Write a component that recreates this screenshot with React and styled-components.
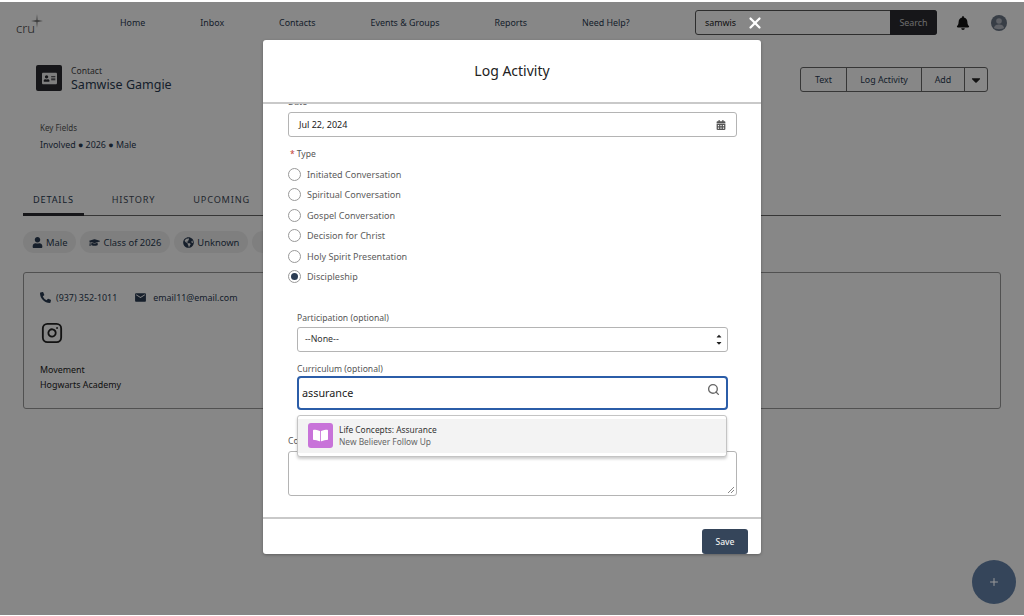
import React from 'react'
import styled, { createGlobalStyle } from 'styled-components'
import { Search as SearchIcon, Instagram, X, Plus } from 'lucide-react'
import { FaBell, FaCaretDown, FaCaretUp, FaPhoneAlt, FaGlobeAmericas, FaUser, FaBookOpen, FaAddressCard, FaGraduationCap, FaCalendarAlt } from 'react-icons/fa'
import { MdEmail } from 'react-icons/md'

const GlobalStyle = createGlobalStyle`
  html, body { margin: 0; padding: 0; height: 100%; background: #fff; overflow: hidden; }
  body { font-family: "Noto Sans", "Open Sans", sans-serif; color: #181818; }
  * { box-sizing: border-box; }
`

const Page = styled.div`
  width: 1024px;
  height: 616px;
  overflow: hidden;
  position: relative;
`

const Nav = styled.nav`
  height: 47px;
  padding: 10px 17px 0 16px;
  display: flex;
  align-items: flex-start;
`
const Logo = styled.div`
  width: 26px;
  height: 24px;
  margin-top: 3px;
  position: relative;
  font-size: 13px;
  line-height: 13px;
  padding-top: 9px;
  font-weight: 300;
  color: #444;
  svg { position: absolute; right: -1px; top: 1px; }
`
const NavLinks = styled.div`
  display: flex;
  gap: 55px;
  margin-left: 78px;
  flex: 1;
  padding-top: 6px;
`
const NavLink = styled.span`
  font-size: 8.9px;
  line-height: 13px;
  color: #2a3b52;
`
const SearchBox = styled.div`
  width: 242px;
  height: 25px;
  border: 1px solid #555;
  border-radius: 3px;
  display: flex;
  align-items: center;
  justify-content: space-between;
  padding-left: 9px;
  font-size: 8.9px;
  color: #222;
`
const SearchButton = styled.div`
  width: 47px;
  height: 25px;
  margin-right: -1px;
  background: #2b2b30;
  color: #ccc;
  display: flex;
  align-items: center;
  justify-content: center;
  border-radius: 0 3px 3px 0;
`
const NavIcons = styled.div`
  display: flex;
  align-items: center;
  gap: 21px;
  margin-left: 19px;
  height: 25px;
`

const RecordHeader = styled.header`
  display: flex;
  justify-content: space-between;
  padding: 18px 36px 0 36px;
  height: 70px;
`
const RecordTitle = styled.div`
  display: flex;
  gap: 9px;
`
const RecordIcon = styled.div`
  width: 26px;
  height: 26px;
  background: #2b2b30;
  border-radius: 2px;
  color: #eee;
  display: flex;
  align-items: center;
  justify-content: center;
`
const RecordType = styled.div`
  font-size: 8.6px;
  line-height: 12px;
  color: #444;
`
const RecordName = styled.div`
  font-size: 12.5px;
  line-height: 16px;
  color: #2a3b52;
`
const ButtonGroup = styled.div`
  display: flex;
  height: 25px;
  margin-top: 2px;
  border: 1px solid #666;
  border-radius: 3px;
`
const GroupButton = styled.div`
  width: ${p => p.$w}px;
  display: flex;
  align-items: center;
  justify-content: center;
  font-size: 8.9px;
  color: #2a3b52;
  & + & { border-left: 1px solid #666; }
`

const KeyFields = styled.section`
  padding: 5px 40px 0;
  height: 67px;
`
const FieldLabel = styled.div`
  font-size: 8px;
  line-height: 12px;
  color: #555;
`
const FieldValue = styled.div`
  font-size: 8.9px;
  line-height: 12px;
  margin-top: 5px;
  color: #2a3b52;
`

const Tabs = styled.div`
  margin: 0 23px;
  height: 32px;
  padding-left: 10px;
  display: flex;
  gap: 38px;
  border-bottom: 1px solid #666;
  position: relative;
`
const Tab = styled.div`
  font-size: 9.2px;
  letter-spacing: 0.8px;
  line-height: 13px;
  padding-top: 9px;
  color: ${p => p.$active ? '#2a3b52' : '#444c58'};
  position: relative;
  &::after {
    content: '';
    display: ${p => p.$active ? 'block' : 'none'};
    position: absolute;
    left: -10px;
    right: -10px;
    bottom: -1px;
    height: 3px;
    background: #2b2b30;
  }
`
const Pills = styled.div`
  display: flex;
  gap: 4px;
  margin: 15px 23px 0;
`
const Pill = styled.div`
  height: 22px;
  border-radius: 11px;
  background: #f0f0f0;
  padding: 0 9px 0 ${p => p.$lead || 9}px;
  display: flex;
  align-items: center;
  gap: 3px;
  font-size: 9.4px;
  color: #2a3b52;
  white-space: nowrap;
`
const Card = styled.section`
  margin: 19px 23px 0;
  height: 137px;
  border: 1px solid #999;
  border-radius: 3px;
  padding: 17px 16px 0;
`
const ContactRow = styled.div`
  display: flex;
  align-items: center;
  height: 14px;
  gap: 5px;
  font-size: 8.9px;
  color: #2a3b52;
`
const EmailIcon = styled(MdEmail)`
  margin-left: 12px;
  margin-right: 1px;
`
const SocialIcon = styled(Instagram)`
  display: block;
  margin: 18px 0 18px 1px;
  color: #222;
`
const CardLine = styled.div`
  font-size: 8.9px;
  line-height: 15px;
  color: #222;
`

const Overlay = styled.div`
  position: absolute;
  inset: 2px 0 1px 0;
  background: rgba(0, 0, 0, 0.47);
`
const Modal = styled.div`
  position: absolute;
  left: 263px;
  top: 38px;
  width: 498px;
  height: 514px;
  background: #fff;
  border-radius: 3px;
  box-shadow: 0 1px 3px rgba(0,0,0,.3);
  display: flex;
  flex-direction: column;
`
const CloseButton = styled(X)`
  position: absolute;
  right: -3px;
  top: -26px;
  color: #fff;
`
const ModalHeader = styled.div`
  height: 64px;
  flex: none;
  border-bottom: 2px solid #c9c9c9;
  display: flex;
  align-items: center;
  justify-content: center;
  font-size: 14px;
  color: #222;
  padding-bottom: 1px;
`
const ModalBody = styled.div`
  flex: 1;
  overflow: hidden;
  padding: 0 24px 0 25px;
  position: relative;
`
const Form = styled.div`
  margin-top: -8px;
`
const Label = styled.div`
  font-size: 8.6px;
  line-height: 12px;
  color: #555;
  height: 12px;
  span { color: #c23934; margin-right: 2px; }
`
const DateInput = styled.div`
  height: 25px;
  margin-top: 4px;
  border: 1px solid #b4b4b4;
  border-radius: 3px;
  display: flex;
  align-items: center;
  justify-content: space-between;
  padding: 0 10px 0 10px;
  font-size: 9px;
  color: #222;
`
const TypeLabel = styled(Label)`
  margin-top: 10.5px;
  margin-left: 2px;
`
const RadioList = styled.div`
  margin-top: 8px;
  display: flex;
  flex-direction: column;
  gap: 6.4px;
`
const RadioRow = styled.div`
  display: flex;
  align-items: center;
  gap: 6px;
  height: 14px;
  font-size: 9.05px;
  color: #5c5c5c;
`
const RadioDot = styled.div`
  width: 13px;
  height: 13px;
  border-radius: 50%;
  border: 1px solid #999;
  display: flex;
  align-items: center;
  justify-content: center;
  &::after {
    content: '';
    display: ${p => p.$checked ? 'block' : 'none'};
    width: 7px;
    height: 7px;
    border-radius: 50%;
    background: #2a3b52;
  }
`
const SubForm = styled.div`
  margin: 28.5px 9px 0;
`
const SelectBox = styled.div`
  height: 25px;
  margin-top: 3px;
  border: 1px solid #b4b4b4;
  border-radius: 3px;
  display: flex;
  align-items: center;
  justify-content: space-between;
  padding: 0 4px 0 7px;
  font-size: 8.8px;
  color: #333;
`
const SelectArrows = styled.div`
  display: flex;
  flex-direction: column;
  color: #222;
  svg { display: block; margin: -0.5px 0; }
`
const CurriculumLabel = styled(Label)`
  margin-top: 11px;
`
const ComboWrap = styled.div`
  position: relative;
  margin-top: 1px;
`
const ComboInput = styled.div`
  height: 34px;
  width: 431px;
  border: 2px solid #2b5da8;
  border-radius: 4px;
  display: flex;
  align-items: center;
  justify-content: space-between;
  padding: 0 6px 0 3px;
  font-size: 10.8px;
  color: #222;
`
const ComboIcon = styled(SearchIcon)`
  margin-bottom: 6px;
  color: #666;
`
const Dropdown = styled.div`
  position: absolute;
  left: 0;
  top: 39px;
  width: 430px;
  height: 42px;
  background: #fff;
  border: 1px solid #c4c4c4;
  border-radius: 3px;
  box-shadow: 0 2px 3px rgba(0,0,0,.2);
  padding: 3px 0;
  z-index: 2;
`
const Option = styled.div`
  height: 34px;
  background: #f3f3f3;
  display: flex;
  align-items: center;
  gap: 6px;
  padding-left: 10px;
`
const OptionIcon = styled.div`
  width: 25px;
  height: 25px;
  background: #c873d9;
  border-radius: 3px;
  color: #fff;
  display: flex;
  align-items: center;
  justify-content: center;
`
const OptionTitle = styled.div`
  font-size: 8.4px;
  line-height: 12.5px;
  color: #333;
`
const OptionSub = styled.div`
  font-size: 8.4px;
  line-height: 12px;
  color: #666;
`
const CommentLabel = styled(Label)`
  margin-top: 25px;
`
const CommentBox = styled.div`
  height: 45px;
  margin-top: 4px;
  border: 1px solid #b4b4b4;
  border-radius: 3px;
  position: relative;
  svg { position: absolute; right: 1px; bottom: 1px; }
`
const ModalFooter = styled.div`
  height: 37px;
  flex: none;
  border-top: 2px solid #c9c9c9;
  display: flex;
  justify-content: flex-end;
  align-items: flex-end;
  padding-right: 13px;
`
const SaveButton = styled.div`
  width: 46px;
  height: 25px;
  background: #35455a;
  border-radius: 3px;
  color: #eee;
  font-size: 8.6px;
  font-weight: 500;
  display: flex;
  align-items: center;
  justify-content: center;
`
const Fab = styled.div`
  position: absolute;
  right: 8px;
  bottom: 11px;
  width: 44px;
  height: 44px;
  border-radius: 50%;
  background: #35455a;
  color: #9a9a9a;
  display: flex;
  align-items: center;
  justify-content: center;
`

const navItems = ['Home', 'Inbox', 'Contacts', 'Events & Groups', 'Reports', 'Need Help?']
const activityTypes = ['Initiated Conversation', 'Spiritual Conversation', 'Gospel Conversation', 'Decision for Christ', 'Holy Spirit Presentation', 'Discipleship']

export default function App() {
  return (
    <>
      <GlobalStyle />
      <Page>
        <Nav>
          <Logo>
            cru
            <svg width="12" height="14" viewBox="0 0 12 14" fill="#777">
              <path d="M6 0 L6.6 6 L12 7 L6.6 8 L6 14 L5.4 8 L0 7 L5.4 6 Z" />
            </svg>
          </Logo>
          <NavLinks>
            {navItems.map(item => <NavLink key={item}>{item}</NavLink>)}
          </NavLinks>
          <SearchBox>
            samwis
            <SearchButton>Search</SearchButton>
          </SearchBox>
          <NavIcons>
            <FaBell size={14} color="#111" />
            <svg width="16" height="16" viewBox="0 0 16 16">
              <circle cx="8" cy="8" r="8" fill="#6a7585" />
              <circle cx="8" cy="6" r="2.8" fill="#b5bac2" />
              <path d="M3 13 C3.5 10 6 9.5 8 9.5 C10 9.5 12.5 10 13 13 C11.5 14.5 4.5 14.5 3 13 Z" fill="#b5bac2" />
            </svg>
          </NavIcons>
        </Nav>

        <RecordHeader>
          <RecordTitle>
            <RecordIcon><FaAddressCard size={15} /></RecordIcon>
            <div>
              <RecordType>Contact</RecordType>
              <RecordName>Samwise Gamgie</RecordName>
            </div>
          </RecordTitle>
          <ButtonGroup>
            <GroupButton $w={45}>Text</GroupButton>
            <GroupButton $w={75}>Log Activity</GroupButton>
            <GroupButton $w={43}>Add</GroupButton>
            <GroupButton $w={23}><FaCaretDown size={14} color="#222" /></GroupButton>
          </ButtonGroup>
        </RecordHeader>

        <KeyFields>
          <FieldLabel>Key Fields</FieldLabel>
          <FieldValue>Involved ● 2026 ● Male</FieldValue>
        </KeyFields>

        <Tabs>
          <Tab $active>DETAILS</Tab>
          <Tab>HISTORY</Tab>
          <Tab>UPCOMING</Tab>
        </Tabs>

        <Pills>
          <Pill><FaUser size={11} />Male</Pill>
          <Pill><FaGraduationCap size={11} />Class of 2026</Pill>
          <Pill><FaGlobeAmericas size={11} />Unknown</Pill>
          <Pill $lead={13}>Unknown</Pill>
        </Pills>

        <Card>
          <ContactRow>
            <FaPhoneAlt size={11} />(937) 352-1011
            <EmailIcon size={13} />email11@email.com
          </ContactRow>
          <SocialIcon size={22} strokeWidth={2} />
          <CardLine>Movement</CardLine>
          <CardLine>Hogwarts Academy</CardLine>
        </Card>

        <Overlay>
          <Modal>
            <CloseButton size={18} strokeWidth={3} />
            <ModalHeader>Log Activity</ModalHeader>
            <ModalBody>
              <Form>
                <Label>Date</Label>
                <DateInput>
                  Jul 22, 2024
                  <FaCalendarAlt size={10} color="#555" />
                </DateInput>
                <TypeLabel><span>*</span>Type</TypeLabel>
                <RadioList>
                  {activityTypes.map(t => (
                    <RadioRow key={t}>
                      <RadioDot $checked={t === 'Discipleship'} />
                      {t}
                    </RadioRow>
                  ))}
                </RadioList>
                <SubForm>
                  <Label>Participation (optional)</Label>
                  <SelectBox>
                    --None--
                    <SelectArrows>
                      <FaCaretUp size={8} />
                      <FaCaretDown size={8} />
                    </SelectArrows>
                  </SelectBox>
                  <CurriculumLabel>Curriculum (optional)</CurriculumLabel>
                  <ComboWrap>
                    <ComboInput>
                      assurance
                      <ComboIcon size={13} strokeWidth={2.5} />
                    </ComboInput>
                    <Dropdown>
                      <Option>
                        <OptionIcon><FaBookOpen size={15} /></OptionIcon>
                        <div>
                          <OptionTitle>Life Concepts: Assurance</OptionTitle>
                          <OptionSub>New Believer Follow Up</OptionSub>
                        </div>
                      </Option>
                    </Dropdown>
                  </ComboWrap>
                </SubForm>
                <CommentLabel>Comments</CommentLabel>
                <CommentBox>
                  <svg width="8" height="8" viewBox="0 0 8 8" stroke="#888" fill="none">
                    <path d="M1 7 L7 1 M4 7 L7 4" />
                  </svg>
                </CommentBox>
              </Form>
            </ModalBody>
            <ModalFooter>
              <SaveButton>Save</SaveButton>
            </ModalFooter>
          </Modal>
          <Fab><Plus size={12} /></Fab>
        </Overlay>
      </Page>
    </>
  )
}
